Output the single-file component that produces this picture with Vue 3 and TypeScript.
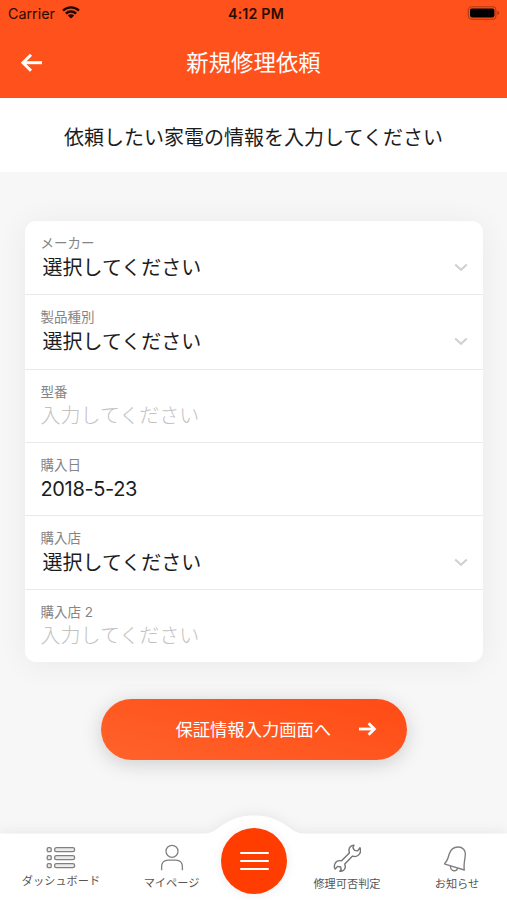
<script setup lang="ts">
interface Field {
  label: string
  value: string
  kind: 'select' | 'input' | 'date'
  height: number
}

const fields: Field[] = [
  { label: 'メーカー', value: '選択してください', kind: 'select', height: 74 },
  { label: '製品種別', value: '選択してください', kind: 'select', height: 75 },
  { label: '型番', value: '入力してください', kind: 'input', height: 73 },
  { label: '購入日', value: '2018-5-23', kind: 'date', height: 73 },
  { label: '購入店', value: '選択してください', kind: 'select', height: 74 },
  { label: '購入店 2', value: '入力してください', kind: 'input', height: 72 },
]
</script>

<template>
  <div class="screen">
    <header class="header">
      <div class="status">
        <div class="carrier">
          <span>Carrier</span>
          <svg width="18" height="13" viewBox="0 0 18 13" fill="none" stroke="#1c0600" stroke-width="2.3">
            <path d="M1 4.6A11.4 11.4 0 0 1 17 4.6" />
            <path d="M3.9 7.6A7.2 7.2 0 0 1 14.1 7.6" />
            <path d="M9 12.6L5.8 9.6A4.5 4.5 0 0 1 12.2 9.6Z" fill="#1c0600" stroke="none" />
          </svg>
        </div>
        <span class="clock">4:12 PM</span>
        <svg class="battery" width="33" height="14" viewBox="0 0 33 14">
          <rect x="1.3" y="0.8" width="27.6" height="12.4" rx="3.4" fill="none" stroke="#b5380f" stroke-width="1.1" />
          <rect x="3" y="2.6" width="24.4" height="8.8" rx="1.8" fill="#000" />
          <path d="M30.4 5v4q1.6-.5 1.6-2t-1.6-2" fill="#a5300a" />
        </svg>
      </div>
      <div class="titlebar">
        <svg class="back" width="24" height="20" viewBox="0 0 24 20" fill="none" stroke="#fff" stroke-width="3">
          <path d="M23 9.7H4.5" />
          <path d="M12 1.7L4 9.7l8 8" />
        </svg>
        <h1>新規修理依頼</h1>
      </div>
    </header>

    <div class="lead">依頼したい家電の情報を入力してください</div>

    <main class="main">
      <section class="card">
        <div
          v-for="f in fields"
          :key="f.label"
          class="field"
          :class="f.kind"
          :style="{ height: f.height + 'px' }"
        >
          <div class="texts">
            <span class="label">{{ f.label }}</span>
            <span class="value">{{ f.value }}</span>
          </div>
          <svg v-if="f.kind === 'select'" class="chevron" width="14" height="9" viewBox="0 0 14 9" fill="none" stroke="#d0d0d0" stroke-width="2">
            <path d="M1.2 1.4l5.8 5.4 5.8-5.4" />
          </svg>
        </div>
      </section>

      <button class="submit">
        <span>保証情報入力画面へ</span>
        <svg width="18" height="14" viewBox="0 0 18 14" fill="none" stroke="#fff" stroke-width="2.8">
          <path d="M0 7H15.5" />
          <path d="M9.6 1.2L15.4 7l-5.8 5.8" />
        </svg>
      </button>
    </main>

    <nav class="nav">
      <svg class="navshape" width="507" height="104" viewBox="0 0 507 104">
        <path d="M0 37.5H204Q212 37.5 219 31.5C229 24 239 19.5 254 19.5S279 24 289 31.5Q296 37.5 304 37.5H507V104H0Z" fill="#fff" />
      </svg>
      <a class="item dashboard">
        <svg width="30" height="24" viewBox="0 0 30 24" fill="#ececec" stroke="#808080" stroke-width="1.3">
          <rect x="1.2" y="1.7" width="4" height="4" rx="1.2" />
          <rect x="8.6" y="1.7" width="20" height="4" rx="1.8" />
          <rect x="1.2" y="9.7" width="4" height="4" rx="1.2" />
          <rect x="8.6" y="9.7" width="20" height="4" rx="1.8" />
          <rect x="1.2" y="17.7" width="4" height="4" rx="1.2" />
          <rect x="8.6" y="17.7" width="20" height="4" rx="1.8" />
        </svg>
        <span>ダッシュボード</span>
      </a>
      <a class="item mypage">
        <svg width="24" height="28" viewBox="0 0 24 28" fill="none" stroke="#808080" stroke-width="1.3">
          <circle cx="12" cy="7.3" r="6" />
          <path d="M1.6 26.2V23.1C1.6 18.3 4.2 16.1 8.2 16.1H15.8C19.8 16.1 22.4 18.3 22.4 23.1V26.2" />
        </svg>
        <span>マイページ</span>
      </a>
      <a class="menu">
        <i></i><i></i><i></i>
      </a>
      <a class="item repair">
        <svg width="28.5" height="30" viewBox="0 0 30 30" fill="none" stroke="#757575" stroke-width="1.5" stroke-linejoin="round">
          <path d="M22 1.6C18.9 1.7 16.7 4 16.8 7L17.2 9.7L9 18C6.2 17.4 3.4 18.4 2.2 20.8C1.1 23 1.3 25.2 2.3 26.7L4.8 23.8L8 24.4L8.6 27.3L7.2 28.9C10.3 29.2 12.7 27.3 13 24.4L12.4 21.2L20.6 13C23.4 14 26.8 13 28.2 10.3C29.2 8.4 29.2 6.2 28.4 4.2L25.9 7.5L22.7 7L21 4.3Z" />
        </svg>
        <span>修理可否判定</span>
      </a>
      <a class="item notice">
        <svg width="26" height="28" viewBox="0 0 26 28" fill="none" stroke="#808080" stroke-width="1.4" stroke-linejoin="round">
          <path d="M.2 18.8C3.3 16.6 4.2 13 5.2 9C6.6 4.3 9.8 2 14 2C18.8 2 21.8 5.2 21.3 10C20.9 14.8 19.4 20 20.3 25Z" />
          <path d="M6.4 21C6.4 23.6 8 25.7 10 25.8C11.8 25.9 13.2 24.8 13.6 23.1" />
        </svg>
        <span>お知らせ</span>
      </a>
    </nav>
  </div>
</template>

<style>
body {
  margin: 0;
}
</style>

<style scoped>
.screen {
  width: 507px;
  height: 900px;
  display: flex;
  flex-direction: column;
  overflow: hidden;
  background: #f7f7f7;
  font-family: Inter, 'Noto Sans CJK JP', sans-serif;
  color: #1c1c1c;
}
.header {
  height: 98px;
  flex: none;
  background: #ff511b;
}
.status {
  height: 28px;
  padding: 0 7px 0 8px;
  display: grid;
  grid-template-columns: 1fr auto 1fr;
  align-items: center;
  font-size: 14.3px;
  color: #2a0b00;
}
.carrier {
  display: flex;
  align-items: center;
  gap: 7px;
  margin-top: -2px;
}
.carrier svg {
  margin-bottom: 1px;
}
.clock {
  font-weight: 600;
  font-size: 14.2px;
  letter-spacing: 0.2px;
  margin-top: -2px;
  margin-left: 4px;
}
.battery {
  justify-self: end;
  margin-bottom: 2px;
}
.titlebar {
  height: 69px;
  display: grid;
  grid-template-columns: 1fr auto 1fr;
  align-items: center;
}
.back {
  margin-left: 19px;
}
h1 {
  margin: 0;
  font-size: 22.4px;
  font-weight: 400;
  line-height: 30px;
  color: #fff;
}
.lead {
  height: 74px;
  flex: none;
  display: flex;
  align-items: center;
  justify-content: center;
  padding-top: 3px;
  box-sizing: border-box;
  background: #fff;
  font-size: 20px;
}
.main {
  flex: 1;
  padding: 49px 24.5px 0;
  display: flex;
  flex-direction: column;
  align-items: center;
}
.card {
  width: 100%;
  border-radius: 11px;
  background: #fff;
  box-shadow: 0 2px 32px rgba(0, 0, 0, 0.06);
}
.field {
  box-sizing: border-box;
  padding: 12px 15px 0 16px;
  display: flex;
  justify-content: space-between;
  border-bottom: 1px solid #e9e9e9;
}
.field:last-child {
  border-bottom: 0;
}
.texts {
  display: flex;
  flex-direction: column;
}
.label {
  font-size: 13.5px;
  line-height: 20px;
  color: #858585;
}
.value {
  font-size: 20px;
  line-height: 30px;
}
.select .value {
  padding-left: 2px;
}
.input .value {
  color: #c2c2c2;
  font-weight: 300;
  line-height: 28px;
}
.date .value {
  letter-spacing: -0.35px;
  line-height: 28px;
}
.chevron {
  margin-top: 30px;
}
.submit {
  width: 306px;
  height: 61px;
  margin-top: 36.5px;
  padding: 0 30px 0 75px;
  border: 0;
  border-radius: 31px;
  display: flex;
  align-items: center;
  justify-content: space-between;
  background: linear-gradient(14deg, #ff632b, #ff4d17 90%);
  box-shadow: 0 4px 20px rgba(0, 0, 0, 0.17);
  font-family: inherit;
  font-size: 17.3px;
  color: #fff;
}
.submit span {
  margin-bottom: 2px;
}
.nav {
  position: relative;
  height: 67px;
  flex: none;
  display: grid;
  grid-template-columns: 122px 99px 66px 120px 100px;
}
.navshape {
  position: absolute;
  left: 0;
  bottom: 0;
  filter: drop-shadow(0 -2px 6px rgba(0, 0, 0, 0.06));
}
.item {
  position: relative;
  display: flex;
  flex-direction: column;
  align-items: center;
  font-size: 11.2px;
  line-height: 16px;
  color: #555;
  white-space: nowrap;
}
.item svg {
  flex: none;
}
.item span {
  margin-top: 3px;
}
.dashboard {
  padding-top: 13px;
}
.mypage {
  padding-top: 11px;
}
.repair {
  padding-top: 10px;
}
.notice {
  padding-top: 12px;
}
.menu {
  position: relative;
  width: 66px;
  height: 66px;
  margin-top: -5px;
  border-radius: 50%;
  background: #ff3d00;
  box-shadow: 0 1px 12px rgba(0, 0, 0, 0.07);
  display: flex;
  flex-direction: column;
  align-items: center;
  justify-content: center;
  gap: 6px;
}
.menu i {
  width: 29px;
  height: 2px;
  border-radius: 1px;
  background: #fff;
}
</style>
